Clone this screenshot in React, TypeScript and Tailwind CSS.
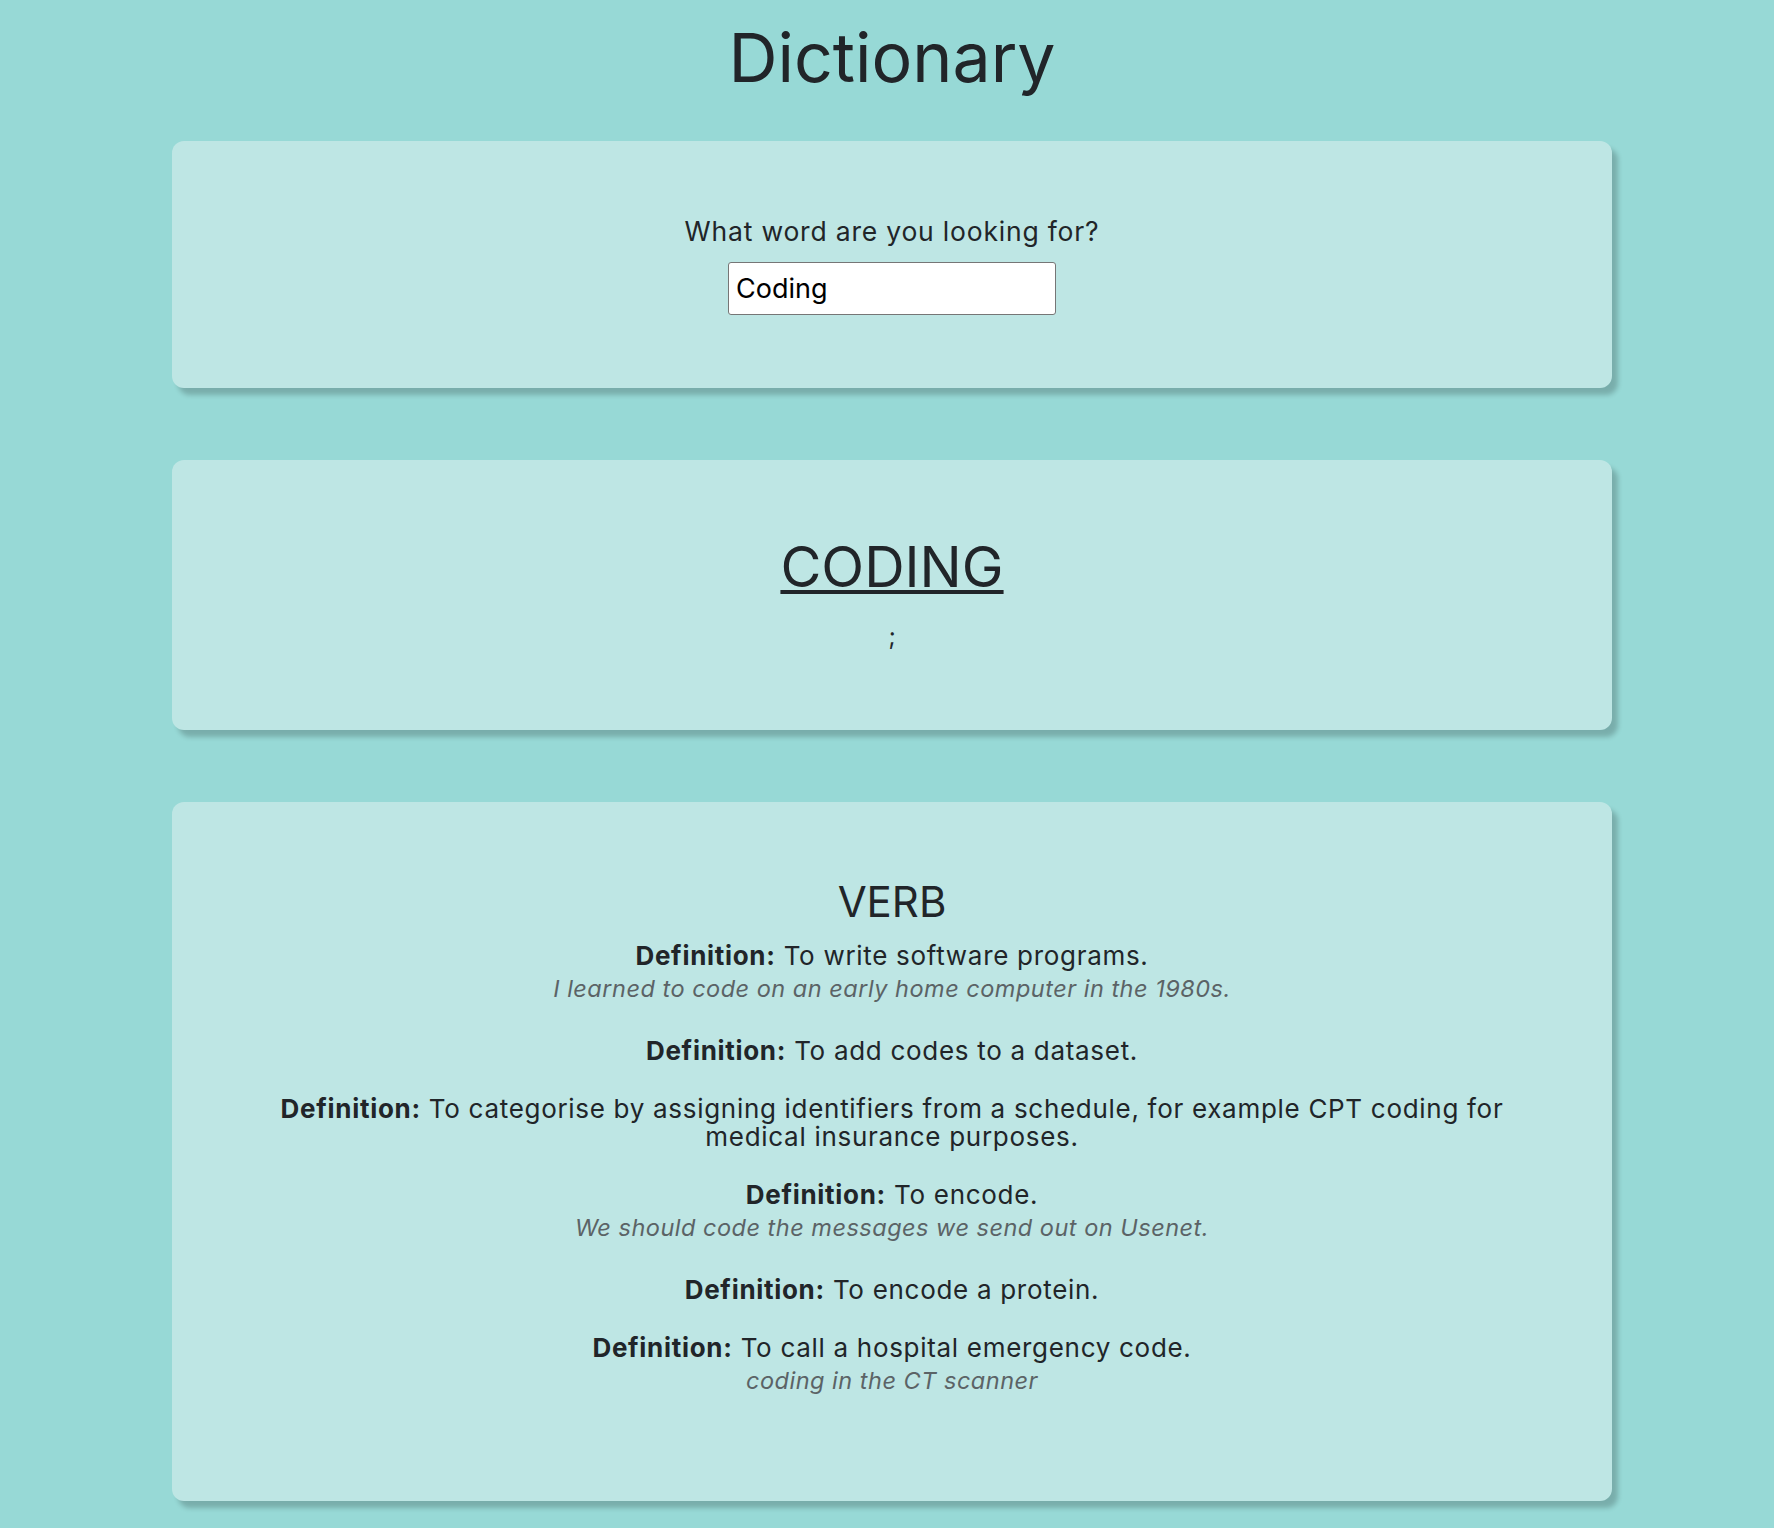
import React from 'react';

type Meaning = {
  definition: string;
  example?: string;
};

const meanings: Meaning[] = [
  { definition: 'To write software programs.', example: 'I learned to code on an early home computer in the 1980s.' },
  { definition: 'To add codes to a dataset.' },
  { definition: 'To categorise by assigning identifiers from a schedule, for example CPT coding for medical insurance purposes.' },
  { definition: 'To encode.', example: 'We should code the messages we send out on Usenet.' },
  { definition: 'To encode a protein.' },
  { definition: 'To call a hospital emergency code.', example: 'coding in the CT scanner' },
];

const card = 'bg-[#bee6e4] rounded-[12px] shadow-[6px_7px_5px_rgba(0,0,0,0.2)] text-center';

export default function App() {
  return (
    <div className="min-h-screen w-full bg-[#97d9d6] text-[#212529] font-['Inter','Liberation_Sans',sans-serif] pb-[28px]">
      <div className="w-[1450px] mx-auto pl-[10px]">
        <h1 className="text-[68px] leading-[84px] font-normal text-center pt-[15px] mb-[42px]">Dictionary</h1>

        {/* search */}
        <section className={`${card} pt-[71px] pb-[73px]`}>
          <form onSubmit={(e) => e.preventDefault()} className="flex flex-col items-center">
            <label htmlFor="word" className="text-[26.5px] leading-[39px] tracking-[0.8px]">What word are you looking for?</label>
            <input
              id="word"
              type="search"
              defaultValue="Coding"
              className="mt-[11px] w-[328px] h-[53px] bg-white border border-[#767676] rounded-[3px] px-[7px] text-[27px] text-black outline-none"
            />
          </form>
        </section>

        {/* word + phonetic */}
        <section className={`${card} mt-[72px] pt-[74px] pb-[75px]`}>
          <h2 className="text-[56px] leading-[67px] uppercase underline decoration-[4px] underline-offset-[3px]">Coding</h2>
          <p className="mt-[18px] text-[24px] leading-[36px]">;</p>
        </section>

        {/* meanings */}
        <section className={`${card} mt-[72px] pt-[75px] pb-[72px] px-[90px]`}>
          <h3 className="text-[42px] leading-[50px] uppercase">Verb</h3>
          <div className="mt-[15px]">
            {meanings.map((m, i) => (
              <div key={i} className="mb-[30px]">
                <div className="text-[26px] leading-[28px] tracking-[0.7px]">
                  <strong className="font-bold">Definition:</strong> {m.definition}
                </div>
                {m.example && (
                  <div className="text-[23.5px] leading-[37px] tracking-[0.5px] italic text-[#5b6366]">{m.example}</div>
                )}
              </div>
            ))}
          </div>
        </section>
      </div>
    </div>
  );
}
